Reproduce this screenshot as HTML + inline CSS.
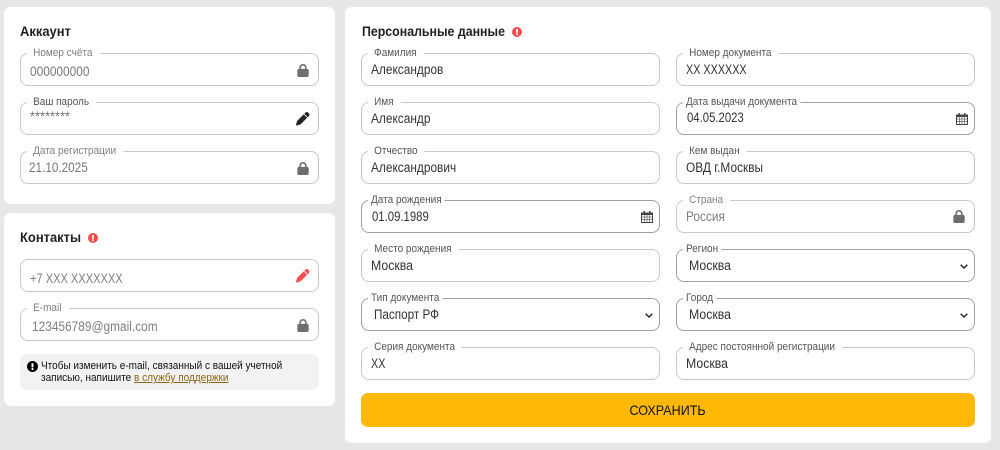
<!DOCTYPE html>
<html lang="ru"><head><meta charset="utf-8"><title>Профиль</title>
<style>
html,body{margin:0;padding:0}
body{width:1000px;height:450px;background:#e7e7e7;position:relative;overflow:hidden;font-family:"Liberation Sans",sans-serif;color:#333}
.c{position:absolute;background:#fff;border-radius:7px}
.t{position:absolute;font-size:14px;line-height:18px;font-weight:bold;color:#222;white-space:nowrap;transform-origin:left center;transform:scaleX(.925)}
.f{position:absolute;width:299px;height:33px;box-sizing:border-box;border:1px solid #c8c8c8;border-radius:8px;background:#fff}
.f.d{border-color:#a0a0a0}
.l{position:absolute;left:6px;top:-8px;padding:0 7.800px 0 6.700px;background:#fff;font-size:11px;line-height:14px;color:#555;white-space:nowrap;transform-origin:left center;transform:scaleX(.91)}
.d .l{left:6px;padding:0 3.500px 0 3.300px}
.g .l{color:#808080}
.v,.s{position:absolute;left:9px;top:7px;font-size:13.500px;line-height:18px;color:#333;white-space:nowrap;transform-origin:left center;transform:scaleX(.88)}
.s{left:12px;transform:scaleX(.9)}
.g .v{color:#808080}
svg{position:absolute;display:block}
</style></head><body>
<div class="c" style="left:4px;top:7px;width:331px;height:197px"></div>
<div class="c" style="left:4px;top:213px;width:331px;height:193px"></div>
<div class="c" style="left:345px;top:7px;width:646px;height:436px"></div>

<svg width="0" height="0" style="position:absolute"><defs>
<symbol id="lock" viewBox="0 0 448 512"><path d="M144 144v48H304V144c0-44.2-35.8-80-80-80s-80 35.8-80 80zM80 192V144C80 64.5 144.5 0 224 0s144 64.5 144 144v48h16c35.3 0 64 28.7 64 64V448c0 35.3-28.7 64-64 64H64c-35.3 0-64-28.7-64-64V256c0-35.3 28.7-64 64-64H80z"/></symbol>
<symbol id="pen" viewBox="0 0 512 512"><path d="M362.7 19.3L314.3 67.7 444.3 197.7l48.4-48.4c25-25 25-65.5 0-90.5L453.3 19.3c-25-25-65.5-25-90.5 0zm-71 71L58.6 323.5c-10.4 10.4-18 23.3-22.2 37.4L1 481.2C-1.5 489.7 .8 498.8 7 505s15.3 8.5 23.7 6.1l120.3-35.4c14.1-4.2 27-11.8 37.4-22.2L421.7 220.3 291.7 90.3z"/></symbol>
<symbol id="cal" viewBox="0 0 12 12"><path d="M.5 2h11v9.500H.5z" fill="none" stroke="#444" stroke-width="1"/><path d="M0 1.500h12V4H0z" fill="#444"/><path d="M2.500 0h1.400v2.500H2.500zM8.100 0h1.400v2.500H8.100z" fill="#444"/><path d="M3.500 4v7M6 4v7M8.500 4v7M1 6h10M1 8.500h10" stroke="#666" stroke-width=".7" fill="none"/></symbol>
<symbol id="chev" viewBox="0 0 8 5"><path d="M.7.7L4 4 7.300.7" fill="none" stroke="#222" stroke-width="1.400"/></symbol>
<symbol id="ex" viewBox="0 0 10 10"><circle cx="5" cy="5" r="5"/><rect x="4.100" y="2" width="1.800" height="3.800" rx=".6" fill="#fff"/><circle cx="5" cy="7.300" r="1" fill="#fff"/></symbol>
</defs></svg>

<div class="t" style="left:20px;top:22px">Аккаунт</div>
<div class="f g" style="left:20px;top:53px"><span class="l">Номер счёта</span><span class="v" style="top:9px;color:#777">000000000</span><svg width="12" height="13" style="left:276px;top:10px" fill="#6e6e6e"><use href="#lock"/></svg></div>
<div class="f" style="left:20px;top:102px"><span class="l">Ваш пароль</span><span class="v" style="top:5px;color:#777;transform:scaleX(.95)">********</span><svg width="13.500" height="13.500" style="left:275px;top:9px" fill="#222"><use href="#pen"/></svg></div>
<div class="f g" style="left:20px;top:151px"><span class="l">Дата регистрации</span><span class="v" style="top:7px;left:8px;color:#777;transform:scaleX(.87)">21.10.2025</span><svg width="12" height="13" style="left:276px;top:10px" fill="#6e6e6e"><use href="#lock"/></svg></div>

<div class="t" style="left:20px;top:228px">Контакты</div>
<svg width="10" height="10" style="left:88px;top:233px" fill="#f44d4d"><use href="#ex"/></svg>
<div class="f g" style="left:20px;top:259px"><span class="v" style="top:10px;color:#808080;transform:scaleX(.82)">+7 XXX XXXXXXX</span><svg width="13.500" height="13.500" style="left:275px;top:9px" fill="#f44d4d"><use href="#pen"/></svg></div>
<div class="f g" style="left:20px;top:308px"><span class="l">E-mail</span><span class="v" style="left:11px;top:9px">123456789@gmail.com</span><svg width="12" height="13" style="left:276px;top:10px" fill="#6e6e6e"><use href="#lock"/></svg></div>
<div style="position:absolute;left:20px;top:354px;width:299px;height:36px;background:#f2f2f2;border-radius:7px"></div>
<svg width="11" height="11" style="left:27px;top:361px" fill="#000"><use href="#ex"/></svg>
<div style="position:absolute;left:41px;top:360px;font-size:11px;line-height:12px;color:#111;white-space:nowrap;transform-origin:left top;transform:scaleX(.91)">Чтобы изменить e-mail, связанный с вашей учетной<br>записью, напишите <span style="color:#8a6414;text-decoration:underline">в службу поддержки</span></div>

<div class="t" style="left:362px;top:22px;transform:scaleX(.883)">Персональные данные</div>
<svg width="10" height="10" style="left:512px;top:27px" fill="#f44d4d"><use href="#ex"/></svg>

<div class="f" style="left:361px;top:53px"><span class="l">Фамилия</span><span class="v">Александров</span></div>
<div class="f" style="left:361px;top:102px"><span class="l">Имя</span><span class="v">Александр</span></div>
<div class="f" style="left:361px;top:151px"><span class="l">Отчество</span><span class="v">Александрович</span></div>
<div class="f d" style="left:361px;top:200px"><span class="l">Дата рождения</span><span class="v" style="left:10px;transform:scaleX(.84)">01.09.1989</span><svg width="12" height="12" style="left:279px;top:10px"><use href="#cal"/></svg></div>
<div class="f" style="left:361px;top:249px"><span class="l">Место рождения</span><span class="v" style="transform:scaleX(.91)">Москва</span></div>
<div class="f d" style="left:361px;top:298px"><span class="l">Тип документа</span><span class="s" style="transform:scaleX(.867)">Паспорт РФ</span><svg width="8" height="5" style="left:283px;top:14px"><use href="#chev"/></svg></div>
<div class="f" style="left:361px;top:347px"><span class="l">Серия документа</span><span class="v" style="transform:scaleX(.8)">XX</span></div>

<div class="f" style="left:676px;top:53px"><span class="l">Номер документа</span><span class="v" style="transform:scaleX(.8)">XX XXXXXX</span></div>
<div class="f d" style="left:676px;top:102px"><span class="l">Дата выдачи документа</span><span class="v" style="left:10px;top:6px;transform:scaleX(.84)">04.05.2023</span><svg width="12" height="12" style="left:279px;top:10px"><use href="#cal"/></svg></div>
<div class="f" style="left:676px;top:151px"><span class="l">Кем выдан</span><span class="v">ОВД г.Москвы</span></div>
<div class="f g" style="left:676px;top:200px"><span class="l">Страна</span><span class="v">Россия</span><svg width="12" height="13" style="left:276px;top:9px" fill="#6e6e6e"><use href="#lock"/></svg></div>
<div class="f d" style="left:676px;top:249px"><span class="l">Регион</span><span class="s" style="transform:scaleX(.91)">Москва</span><svg width="8" height="5" style="left:283px;top:14px"><use href="#chev"/></svg></div>
<div class="f d" style="left:676px;top:298px"><span class="l">Город</span><span class="s" style="transform:scaleX(.91)">Москва</span><svg width="8" height="5" style="left:283px;top:14px"><use href="#chev"/></svg></div>
<div class="f" style="left:676px;top:347px"><span class="l">Адрес постоянной регистрации</span><span class="v" style="transform:scaleX(.91)">Москва</span></div>

<div style="position:absolute;left:361px;top:393px;width:614px;height:34px;background:#ffb806;border-radius:7px;text-align:center;font-size:14px;line-height:34px;color:#111"><span style="display:inline-block;transform:scaleX(.895)">СОХРАНИТЬ</span></div>
</body></html>
